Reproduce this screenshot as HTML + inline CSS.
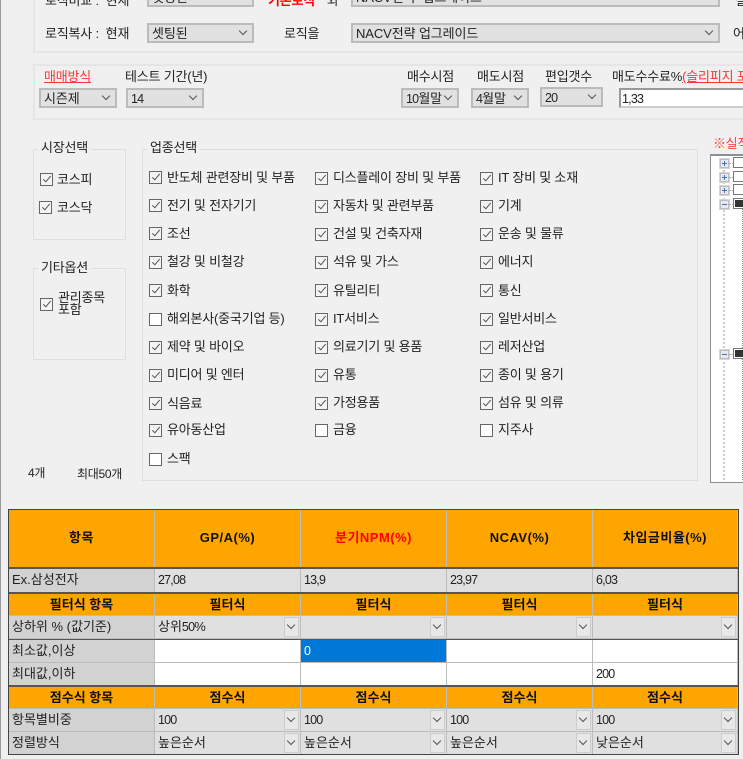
<!DOCTYPE html>
<html lang="ko"><head><meta charset="utf-8"><title>설정</title>
<style>
html,body{margin:0;padding:0}
html{background:#f0f0f0}
body{width:743px;height:759px;position:relative;overflow:hidden;background:#f0f0f0;color:#222;font-family:"Liberation Sans","Noto Sans CJK KR",sans-serif;font-size:13px;filter:blur(.3px)}
.t{position:absolute;white-space:nowrap;line-height:16px;height:16px;font-size:13px;letter-spacing:-.2px;margin-top:1px}
.red{color:#f33}
.n{font-size:12.5px;letter-spacing:-.8px}
.p{position:absolute;border:2px solid #e6e6e6;box-sizing:border-box}
.g{position:absolute;border:1px solid #dedede;box-sizing:border-box}
.c{position:absolute;box-sizing:border-box;background:#e1e1e1;border:2px solid #b8bcbf;line-height:17px;padding-left:3px;white-space:nowrap;overflow:hidden;letter-spacing:-.1px}
.c::after,.b::after{content:"";position:absolute;width:6px;height:6px;border-right:1px solid #555;border-bottom:1px solid #555;transform:rotate(45deg);box-sizing:border-box}
.c::after{right:6px;top:3px}
.c.i::after{display:none}
.k{position:absolute;width:13px;height:13px;box-sizing:border-box;border:1px solid #666;background:#fff}
.k.v{background:#f4f4f4}
.k.v::after{content:"";position:absolute;left:3.5px;top:0;width:4px;height:8px;border-right:1.3px solid #555;border-bottom:1.3px solid #555;transform:rotate(40deg);box-sizing:border-box}
.band{position:absolute;left:9px;width:729px;display:grid;grid-template-columns:145px 145px 145px 145px 144px;column-gap:1px;background:#bcbcbc}
.band>div{position:relative;line-height:22px;padding-left:3px;white-space:nowrap;overflow:hidden;letter-spacing:0}
.o>div{background:#ffa500;text-align:center;padding:0;font-weight:bold;color:#111}
.h>div{letter-spacing:.5px;line-height:56px}
.o>div{line-height:22px}
.h>div{line-height:56px}
.e>div{background:#e0e0e0}
.e>div:first-child,.w>div:first-child{background:#d2d2d2}
.w>div{background:#fff}
.b{position:absolute;right:1px;top:1px;bottom:1px;width:15px;background:#e8e8e8;border:1px solid #ccc;box-sizing:border-box}
.b::after{left:3px;top:4px}
.x{position:absolute;left:720px;width:9px;height:9px;box-sizing:border-box;border:1px solid #bdbdbd;background:#e6eaf0;outline:1px solid #d6d6d6}
.x::before{content:"";position:absolute;left:1px;top:3px;width:5px;height:1px;background:#4a6fb5}
.x.pl::after{content:"";position:absolute;left:3px;top:1px;width:1px;height:5px;background:#4a6fb5}
.tk{position:absolute;left:733px;width:20px;height:11px;box-sizing:border-box;border:1.5px solid #777;background:#fff}
.d{position:absolute;left:729px;width:4px;height:0;border-top:1px dotted #aaa}
</style></head><body>
<div style="position:absolute;left:0;top:0;width:1px;height:759px;background:#999"></div>

<div class="p" style="left:33px;top:-20px;width:730px;height:73px"></div>
<div class="t" style="left:45px;top:-8px">로직비교 :&nbsp; 현재</div>
<div class="c" style="left:147px;top:-13px;width:107px;height:20px">셋팅된</div>
<div class="t" style="left:268px;top:-8px;color:#f00;font-weight:bold">기본로직</div>
<div class="t" style="left:327px;top:-8px">와</div>
<div class="c" style="left:351px;top:-13px;width:369px;height:20px">NACV전 구 업그레이드</div>
<div class="t" style="left:735px;top:-8px">설</div>
<div class="t" style="left:45px;top:25px">로직복사 :&nbsp; 현재</div>
<div class="c" style="left:147px;top:23px;width:107px;height:20px">셋팅된</div>
<div class="t" style="left:284px;top:25px">로직을</div>
<div class="c" style="left:351px;top:23px;width:369px;height:20px">NACV전략 업그레이드</div>
<div class="t" style="left:733px;top:25px">어</div>

<div class="p" style="left:33px;top:64px;width:730px;height:56px"></div>
<div class="t red" style="left:44px;top:68px;text-decoration:underline">매매방식</div>
<div class="t" style="left:125px;top:68px">테스트 기간(년)</div>
<div class="c" style="left:39px;top:88px;width:78px;height:20px">시즌제</div>
<div class="c" style="left:126px;top:88px;width:78px;height:20px"><span class="n">14</span></div>
<div class="t" style="left:407px;top:68px">매수시점</div>
<div class="t" style="left:477px;top:68px">매도시점</div>
<div class="t" style="left:545px;top:68px">편입갯수</div>
<div class="t" style="left:612px;top:68px">매도수수료%<span class="red" style="text-decoration:underline">(슬리피지 포함)</span></div>
<div class="c" style="left:401px;top:88px;width:58px;height:20px"><span class="n">10</span>월말</div>
<div class="c" style="left:471px;top:88px;width:58px;height:20px"><span class="n">4</span>월말</div>
<div class="c" style="left:540px;top:87px;width:63px;height:20px"><span class="n">20</span></div>
<div class="c i" style="left:619px;top:88px;width:140px;height:20px;background:#fff;border-color:#999 #ccc #ccc #999;padding-left:1px"><span class="n">1,33</span></div>

<div class="g" style="left:33px;top:149px;width:93px;height:91px"></div>
<div class="t" style="left:38px;top:139px;background:#f0f0f0;padding:0 3px">시장선택</div>
<div class="k v" style="left:40px;top:173px"></div><div class="t" style="left:57px;top:171px">코스피</div>
<div class="k v" style="left:39px;top:201px"></div><div class="t" style="left:57px;top:199px">코스닥</div>
<div class="g" style="left:33px;top:268px;width:93px;height:92px"></div>
<div class="t" style="left:38px;top:259px;background:#f0f0f0;padding:0 3px">기타옵션</div>
<div class="k v" style="left:40px;top:298px"></div>
<div class="t" style="left:58px;top:291px;line-height:12px">관리종목<br>포함</div>

<div class="g" style="left:142px;top:149px;width:556px;height:332px"></div>
<div class="t" style="left:147px;top:139px;background:#f0f0f0;padding:0 3px">업종선택</div>

<div class="k v" style="left:149px;top:171px"></div><div class="t" style="left:167px;top:169px">반도체 관련장비 및 부품</div>
<div class="k v" style="left:149px;top:199px"></div><div class="t" style="left:167px;top:197px">전기 및 전자기기</div>
<div class="k v" style="left:149px;top:227px"></div><div class="t" style="left:167px;top:225px">조선</div>
<div class="k v" style="left:149px;top:256px"></div><div class="t" style="left:167px;top:253px">철강 및 비철강</div>
<div class="k v" style="left:149px;top:284px"></div><div class="t" style="left:167px;top:282px">화학</div>
<div class="k" style="left:149px;top:313px"></div><div class="t" style="left:167px;top:310px">해외본사(중국기업 등)</div>
<div class="k v" style="left:149px;top:341px"></div><div class="t" style="left:167px;top:338px">제약 및 바이오</div>
<div class="k v" style="left:149px;top:369px"></div><div class="t" style="left:167px;top:366px">미디어 및 엔터</div>
<div class="k v" style="left:149px;top:397px"></div><div class="t" style="left:167px;top:395px">식음료</div>
<div class="k v" style="left:149px;top:424px"></div><div class="t" style="left:167px;top:421px">유아동산업</div>
<div class="k" style="left:149px;top:453px"></div><div class="t" style="left:167px;top:450px">스팩</div>

<div class="k v" style="left:315px;top:172px"></div><div class="t" style="left:333px;top:169px">디스플레이 장비 및 부품</div>
<div class="k v" style="left:315px;top:200px"></div><div class="t" style="left:333px;top:197px">자동차 및 관련부품</div>
<div class="k v" style="left:315px;top:228px"></div><div class="t" style="left:333px;top:225px">건설 및 건축자재</div>
<div class="k v" style="left:315px;top:256px"></div><div class="t" style="left:333px;top:253px">석유 및 가스</div>
<div class="k v" style="left:315px;top:284px"></div><div class="t" style="left:333px;top:282px">유틸리티</div>
<div class="k v" style="left:315px;top:313px"></div><div class="t" style="left:333px;top:310px">IT서비스</div>
<div class="k v" style="left:315px;top:341px"></div><div class="t" style="left:333px;top:338px">의료기기 및 용품</div>
<div class="k v" style="left:315px;top:369px"></div><div class="t" style="left:333px;top:366px">유통</div>
<div class="k v" style="left:315px;top:397px"></div><div class="t" style="left:333px;top:394px">가정용품</div>
<div class="k" style="left:315px;top:424px"></div><div class="t" style="left:333px;top:421px">금융</div>

<div class="k v" style="left:480px;top:172px"></div><div class="t" style="left:498px;top:169px">IT 장비 및 소재</div>
<div class="k v" style="left:480px;top:200px"></div><div class="t" style="left:498px;top:197px">기계</div>
<div class="k v" style="left:480px;top:228px"></div><div class="t" style="left:498px;top:225px">운송 및 물류</div>
<div class="k v" style="left:480px;top:256px"></div><div class="t" style="left:498px;top:253px">에너지</div>
<div class="k v" style="left:480px;top:284px"></div><div class="t" style="left:498px;top:282px">통신</div>
<div class="k v" style="left:480px;top:313px"></div><div class="t" style="left:498px;top:310px">일반서비스</div>
<div class="k v" style="left:480px;top:341px"></div><div class="t" style="left:498px;top:338px">레저산업</div>
<div class="k v" style="left:480px;top:369px"></div><div class="t" style="left:498px;top:366px">종이 및 용기</div>
<div class="k v" style="left:480px;top:397px"></div><div class="t" style="left:498px;top:394px">섬유 및 의류</div>
<div class="k" style="left:480px;top:424px"></div><div class="t" style="left:498px;top:421px">지주사</div>

<div class="t" style="left:28px;top:464px;font-size:12px;letter-spacing:-.3px">4개</div>
<div class="t" style="left:77px;top:465px;font-size:12px;letter-spacing:-.3px">최대50개</div>

<div class="t" style="left:713px;top:135px;color:#f44">※실적</div>
<div style="position:absolute;left:710px;top:154px;width:40px;height:329px;background:#fff;border:1px solid #8b9096;border-top-width:2px;box-sizing:border-box"></div>
<div style="position:absolute;left:723px;top:163px;width:0;height:317px;border-left:2px dotted #ccc"></div>
<div style="position:absolute;left:742px;top:207px;width:0;height:273px;border-left:1px dotted #888"></div>
<div class="x pl" style="top:159px"></div><div class="d" style="top:163px"></div><div class="tk" style="top:157px"></div>
<div class="x pl" style="top:173px"></div><div class="d" style="top:177px"></div><div class="tk" style="top:171px"></div>
<div class="x pl" style="top:186px"></div><div class="d" style="top:190px"></div><div class="tk" style="top:184px"></div>
<div class="x" style="top:200px"></div><div class="d" style="top:204px"></div><div class="tk" style="top:198px;background:#333;box-shadow:inset 0 0 0 1px #fff"></div>
<div class="x" style="top:350px"></div><div class="d" style="top:354px"></div><div class="tk" style="top:348px;background:#333;box-shadow:inset 0 0 0 1px #fff"></div>

<div style="position:absolute;left:8px;top:509px;width:731px;height:246px;background:#555;border:1px solid #444;box-sizing:border-box"></div>
<div style="position:absolute;left:9px;top:640px;width:729px;height:45px;background:#bcbcbc"></div>
<div style="position:absolute;left:9px;top:708px;width:729px;height:46px;background:#bcbcbc"></div>
<div class="band o h" style="top:510px;height:57px"><div>항목</div><div>GP/A(%)</div><div style="color:#f00">분기NPM(%)</div><div>NCAV(%)</div><div>차입금비율(%)</div></div>
<div class="band e" style="top:569px;height:23px"><div>Ex.삼성전자</div><div><span class="n">27,08</span></div><div><span class="n">13,9</span></div><div><span class="n">23,97</span></div><div><span class="n">6,03</span></div></div>
<div class="band o" style="top:594px;height:21px"><div>필터식 항목</div><div>필터식</div><div>필터식</div><div>필터식</div><div>필터식</div></div>
<div class="band e" style="top:615px;height:23px;padding-top:1px;grid-auto-rows:22px"><div>상하위 % (값기준)</div><div>상위<span class="n">50</span>%<span class="b"></span></div><div><span class="b"></span></div><div><span class="b"></span></div><div><span class="b"></span></div></div>
<div class="band w" style="top:640px;height:22px"><div>최소값,이상</div><div></div><div style="background:#0078d7;color:#fff"><span class="n">0</span></div><div></div><div></div></div>
<div class="band w" style="top:663px;height:22px;grid-auto-rows:22px"><div>최대값,이하</div><div></div><div></div><div></div><div><span class="n">200</span></div></div>
<div class="band o" style="top:687px;height:21px"><div>점수식 항목</div><div>점수식</div><div>점수식</div><div>점수식</div><div>점수식</div></div>
<div class="band e" style="top:708px;height:23px;padding-top:1px;grid-auto-rows:22px"><div>항목별비중</div><div><span class="n">100</span><span class="b"></span></div><div><span class="n">100</span><span class="b"></span></div><div><span class="n">100</span><span class="b"></span></div><div><span class="n">100</span><span class="b"></span></div></div>
<div class="band e" style="top:732px;height:22px;grid-auto-rows:22px"><div>정렬방식</div><div>높은순서<span class="b"></span></div><div>높은순서<span class="b"></span></div><div>높은순서<span class="b"></span></div><div>낮은순서<span class="b"></span></div></div>
</body></html>
